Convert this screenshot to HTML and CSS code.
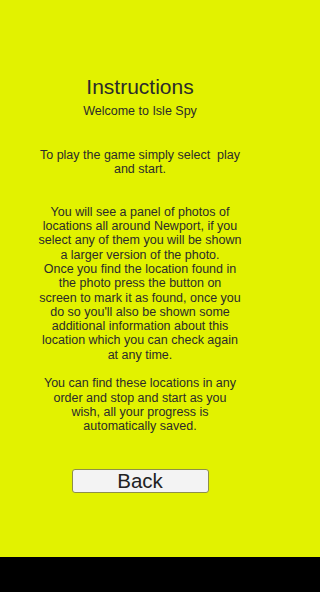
FILE: index.html
```html
<!DOCTYPE html>
<html lang="en">
<head>
<meta charset="utf-8">
<title>Instructions</title>
<link rel="stylesheet" href="styles.css">
</head>
<body>
<div class="screen">
  <main class="content">
    <h1 class="title">Instructions</h1>
    <p class="subtitle">Welcome to Isle Spy</p>
    <p class="para para-first">To play the game simply select&nbsp; play<br>and start.</p>
    <p class="para para-gap3">You will see a panel of photos of<br>locations all around Newport, if you<br>select any of them you will be shown<br>a larger version of the photo.<br>Once you find the location found in<br>the photo press the button on<br>screen to mark it as found, once you<br>do so you'll also be shown some<br>additional information about this<br>location which you can check again<br>at any time.</p>
    <p class="para para-gap1">You can find these locations in any<br>order and stop and start as you<br>wish, all your progress is<br>automatically saved.</p>
    <button class="back-btn" type="button">Back</button>
  </main>
  <div class="nav-bar"></div>
</div>
</body>
</html>
```

FILE: styles.css
```css
html, body {
  margin: 0;
  padding: 0;
}
html {
  background: linear-gradient(#e2f200 557px, #000 557px);
  min-height: 592px;
}
body {
  font-family: "Liberation Sans", Arial, sans-serif;
  color: #2b2b2b;
}
.screen {
  width: 280px;
  height: 592px;
  display: flex;
  flex-direction: column;
}
.content {
  flex: 0 0 557px;
  background: #e2f200;
  display: flex;
  flex-direction: column;
  align-items: center;
  padding-top: 75px;
  box-sizing: border-box;
  text-align: center;
}
.title {
  margin: 0;
  font-size: 21px;
  line-height: 24px;
  font-weight: normal;
}
.subtitle {
  margin: 5px 0 0;
  font-size: 12.5px;
  line-height: 15px;
}
.para {
  margin: 0;
  font-size: 12.5px;
  line-height: 14.3px;
  white-space: nowrap;
}
.para-first {
  margin-top: 28.6px;
}
.para-gap3 {
  margin-top: 28.6px;
}
.para-gap1 {
  margin-top: 14.3px;
}
.back-btn {
  margin-top: 35.5px;
  width: 137px;
  height: 24px;
  box-sizing: border-box;
  background: #f3f3f3;
  border: 1px solid #8e8f4a;
  border-radius: 3px;
  font-family: "Liberation Sans", Arial, sans-serif;
  font-size: 20.5px;
  line-height: 22px;
  color: #222;
  padding: 0;
}
.nav-bar {
  flex: 1 1 auto;
  background: #000;
}
```
